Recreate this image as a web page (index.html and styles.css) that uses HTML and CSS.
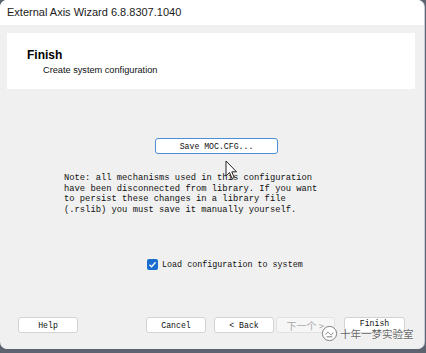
FILE: index.html
```html
<!DOCTYPE html>
<html lang="en">

<head>
    <meta charset="UTF-8">
    <meta name="viewport" content="width=device-width, initial-scale=1.0">
    <title>External Axis Wizard</title>
    <link rel="stylesheet" href="styles.css">
</head>

<body>
    <div class="window">
        <div class="titlebar">External Axis Wizard 6.8.8307.1040</div>

        <div class="content">
            <!-- 상단 헤더 패널 -->
            <div class="header">
                <div class="header-title">Finish</div>
                <div class="header-sub">Create system configuration</div>
            </div>

            <div class="main">
                <button class="btn save-button">Save MOC.CFG...</button>
                <p class="note">Note: all mechanisms used in this configuration
have been disconnected from library. If you want
to persist these changes in a library file
(.rslib) you must save it manually yourself.</p>

                <label class="check-row">
                    <span class="checkbox">
                        <svg width="9" height="9" viewBox="0 0 9 9">
                            <path d="M1.5 4.8 L3.6 6.8 L7.6 2.2" fill="none" stroke="#fff" stroke-width="1.3" />
                        </svg>
                    </span>
                    <span>Load configuration to system</span>
                </label>
            </div>

            <!-- 하단 버튼 -->
            <div class="footer">
                <button class="btn help-button">Help</button>
                <button class="btn cancel-button">Cancel</button>
                <button class="btn back-button">&lt; Back</button>
                <button class="btn next-button" disabled>下一个 &gt;</button>
                <button class="btn finish-button">Finish</button>
            </div>
        </div>

        <!-- 마우스 커서 -->
        <svg class="cursor" width="13" height="20" viewBox="0 0 13 20">
            <path d="M1 1 L1 16 L4.5 12.5 L7 18.5 L9.2 17.5 L6.8 11.8 L11.5 11.8 Z" fill="#fff" stroke="#222" stroke-width="1" stroke-linejoin="round" />
        </svg>

        <!-- 워터마크 -->
        <div class="watermark">
            <svg class="watermark-logo" width="17" height="17" viewBox="0 0 18 18">
                <circle cx="9" cy="9" r="7.5" fill="#fff" stroke="#777" stroke-width="1" />
                <path d="M5 10 Q7 6 9 9 T13 8" fill="none" stroke="#777" stroke-width="1" />
                <path d="M6 12.5 L12 12.5" stroke="#777" stroke-width="1" />
            </svg>
            <span>十年一梦实验室</span>
        </div>
    </div>
</body>

</html>
```

FILE: styles.css
```css
body {
    margin: 0;
    padding: 0;
    background-color: #5d6470;
    font-family: "Liberation Sans", Arial, sans-serif;
    height: 353px;
    overflow: hidden;
}

.window {
    position: relative;
    width: 424px;
    height: 349px;
    background-color: #f0f0f0;
    border-radius: 7px;
    overflow: hidden;
    box-shadow: 1px 0 0 #c9ced6;
}

.titlebar {
    height: 25px;
    line-height: 25px;
    background-color: #fff;
    padding-left: 7px;
    font-size: 11px;
    color: #1b1b1b;
}

.content {
    padding: 8px 9px 0 7px;
}

.header {
    background-color: #fff;
    height: 56px;
    box-sizing: border-box;
    padding: 15px 0 0 20px;
}

.header-title {
    font-weight: bold;
    font-size: 12px;
    color: #000;
}

.header-sub {
    font-size: 9.2px;
    color: #111;
    margin: 3px 0 0 16px;
}

.main {
    display: flex;
    flex-direction: column;
    align-items: flex-start;
}

.btn {
    font-family: "Liberation Mono", "Noto Sans CJK SC", monospace;
    font-size: 8.2px;
    color: #111;
    background-color: #fff;
    border: 1px solid #d3d3d3;
    border-radius: 3px;
    height: 16px;
    padding: 0;
    box-sizing: border-box;
}

.save-button {
    margin: 49px 0 0 148px;
    width: 123px;
    border-color: #4a8fd6;
}

.note {
    font-family: "Liberation Mono", monospace;
    font-size: 8.8px;
    line-height: 10.5px;
    white-space: pre;
    color: #111;
    margin: 19px 0 0 57px;
}

.check-row {
    display: flex;
    align-items: center;
    gap: 4px;
    margin: 44px 0 0 140px;
    font-family: "Liberation Mono", monospace;
    font-size: 8.4px;
    color: #111;
}

.checkbox {
    width: 11px;
    height: 11px;
    border-radius: 2px;
    background-color: #1a6ccd;
    display: flex;
    align-items: center;
    justify-content: center;
}

.footer {
    display: flex;
    margin-top: 47px;
    padding-left: 11px;
}

.help-button {
    width: 60px;
}

.cancel-button {
    width: 60px;
    margin-left: 68px;
}

.back-button {
    width: 60px;
    margin-left: 8px;
}

.next-button {
    width: 59px;
    margin-left: 2px;
    background-color: #f6f6f6;
    color: #a8a8a8;
    border-color: #e2e2e2;
    font-family: "Noto Sans CJK SC", sans-serif;
    font-size: 10px;
}

.finish-button {
    width: 61px;
    margin-left: 9px;
    line-height: 10px;
    padding-bottom: 3px;
}

.cursor {
    position: absolute;
    left: 225px;
    top: 160px;
}

.watermark {
    position: absolute;
    left: 321px;
    top: 325px;
    display: flex;
    align-items: center;
    gap: 2px;
    font-family: "Noto Sans CJK SC", sans-serif;
    font-size: 10.5px;
    color: #666;
    text-shadow: 0 0 2px #fff, 0 0 2px #fff;
}
```
